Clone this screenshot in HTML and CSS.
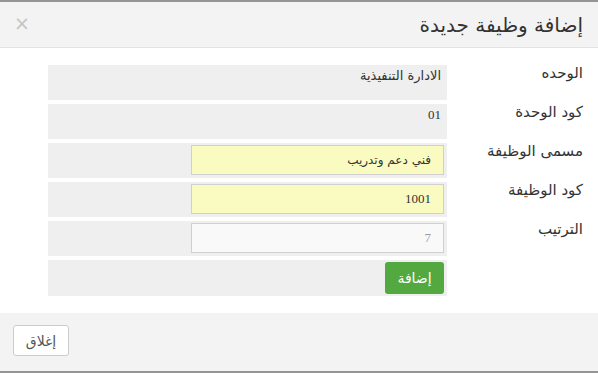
FILE: index.html
```html
<!DOCTYPE html>
<html lang="ar" dir="rtl">
<head>
    <meta charset="utf-8">
    <title>إضافة وظيفة جديدة</title>
    <link rel="stylesheet" href="styles.css">
</head>
<body>
    <div class="modal">
        <div class="modal-header">
            <h4 class="modal-title">إضافة وظيفة جديدة</h4>
            <span class="close">&times;</span>
        </div>

        <form class="modal-body">
            <div class="form-row">
                <label class="form-label">الوحده</label>
                <div class="form-cell"><p class="static-value">الادارة التنفيذية</p></div>
            </div>
            <div class="form-row">
                <label class="form-label">كود الوحدة</label>
                <div class="form-cell"><p class="static-value">01</p></div>
            </div>
            <div class="form-row">
                <label class="form-label" for="job_name">مسمى الوظيفة</label>
                <div class="form-cell"><input type="text" id="job_name" class="form-input" value="فني دعم وتدريب"></div>
            </div>
            <div class="form-row">
                <label class="form-label" for="job_code">كود الوظيفة</label>
                <div class="form-cell"><input type="text" id="job_code" class="form-input" value="1001"></div>
            </div>
            <div class="form-row">
                <label class="form-label" for="job_order">الترتيب</label>
                <div class="form-cell"><input type="text" id="job_order" class="form-input readonly" value="7" readonly></div>
            </div>
            <div class="form-row">
                <span class="form-label"></span>
                <div class="form-cell last"><button type="submit" class="btn-add">إضافة</button></div>
            </div>
        </form>

        <div class="modal-footer">
            <button type="button" class="btn-close">إغلاق</button>
        </div>
    </div>
</body>
</html>
```

FILE: styles.css
```css
html, body {
    height: 100%;
}

body {
    margin: 0;
    background: #959595;
    font-family: "DejaVu Sans", sans-serif;
    color: #333;
    overflow: hidden;
}

.modal {
    margin-top: 2px;
    height: 369px;
    background: #fff;
    display: flex;
    flex-direction: column;
}

.modal-header {
    height: 45px;
    background: #f3f3f3;
    border-bottom: 1px solid #e2e2e2;
    display: flex;
    align-items: center;
    justify-content: space-between;
    padding: 0 15px 0 14px;
}

.modal-title {
    margin: 0;
    font-size: 20px;
    font-weight: normal;
    color: #333;
}

.close {
    font-family: "DejaVu Sans", sans-serif;
    font-size: 19px;
    color: #c4c4c4;
    line-height: 1;
    margin-top: -2px;
}

.modal-body {
    flex: 1;
    margin: 0;
    padding: 17px 15px 0 48px;
    display: flex;
    flex-direction: column;
    gap: 4px;
}

.form-row {
    display: grid;
    grid-template-columns: 136px 1fr;
}

.form-label {
    font-size: 15px;
    line-height: 16px;
    padding-top: 0;
    color: #333;
}

.form-cell {
    background: #efefef;
    height: 35px;
    padding: 2px 3px 0;
    box-sizing: border-box;
}

.form-cell.last {
    height: 36px;
}

.static-value {
    margin: 0;
    padding: 0 3px;
    font-family: "Liberation Serif", "DejaVu Sans", serif;
    font-size: 13px;
    line-height: 18px;
    color: #333;
}

.form-row:first-child .static-value {
    font-family: "DejaVu Sans", sans-serif;
    font-size: 13px;
}

.form-input {
    display: block;
    width: 253px;
    height: 30px;
    box-sizing: border-box;
    margin: 0;
    padding: 0 12px;
    border: 1px solid #d0d0d0;
    background: #f9fbc1;
    font-family: "Liberation Serif", "DejaVu Sans", serif;
    font-size: 13px;
    color: #333;
    text-align: right;
}

#job_name {
    font-family: "DejaVu Sans", sans-serif;
    font-size: 12px;
}

.form-input.readonly {
    background: #f9f9f9;
    color: #999;
}

.btn-add {
    display: block;
    width: 59px;
    height: 32px;
    border: none;
    border-radius: 3px;
    background: #53a93f;
    color: #fff;
    font-family: "DejaVu Sans", sans-serif;
    font-size: 14px;
    cursor: pointer;
}

.modal-footer {
    height: 58px;
    background: #f3f3f3;
    padding: 12px 13px 0;
    box-sizing: border-box;
    display: flex;
    justify-content: flex-end;
    align-items: flex-start;
}

.btn-close {
    width: 56px;
    height: 31px;
    background: #fff;
    border: 1px solid #ccc;
    border-radius: 3px;
    color: #555;
    font-family: "DejaVu Sans", sans-serif;
    font-size: 14px;
    cursor: pointer;
}
```
